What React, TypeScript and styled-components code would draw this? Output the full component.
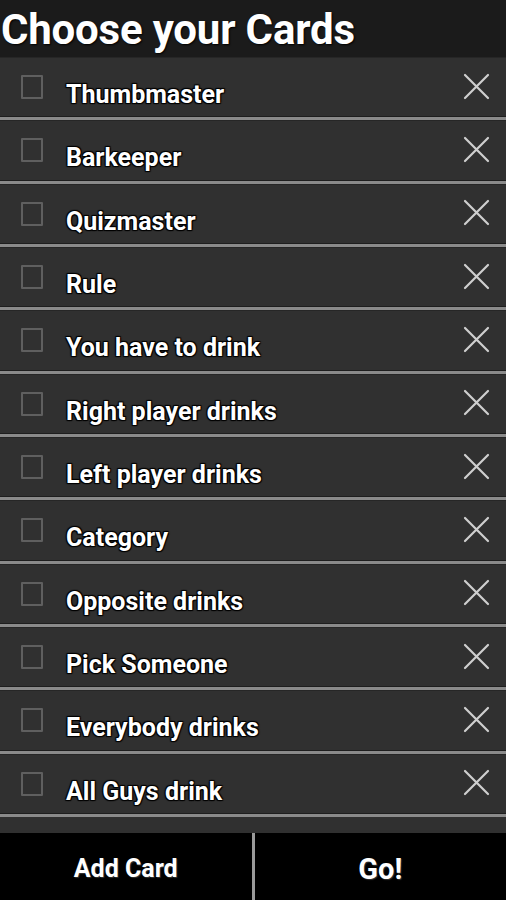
import React from 'react'
import styled, { createGlobalStyle } from 'styled-components'

const GlobalStyle = createGlobalStyle`
  html, body {
    margin: 0;
    padding: 0;
    background: #000;
  }
  body {
    font-family: Roboto, "Noto Sans", "Liberation Sans", sans-serif;
  }
`

const CARDS = [
  'Thumbmaster',
  'Barkeeper',
  'Quizmaster',
  'Rule',
  'You have to drink',
  'Right player drinks',
  'Left player drinks',
  'Category',
  'Opposite drinks',
  'Pick Someone',
  'Everybody drinks',
  'All Guys drink',
]

const Screen = styled.div`
  width: 506px;
  height: 900px;
  display: flex;
  flex-direction: column;
  overflow: hidden;
  background: #2f2f2f;
`

const Header = styled.h1`
  margin: 0;
  height: 57px;
  flex-shrink: 0;
  background: #1b1b1b;
  color: #fff;
  font-size: 42px;
  font-weight: 700;
  line-height: 60px;
  padding-left: 1px;
  text-shadow: 1px 1px 2px #000;
  letter-spacing: -0.2px;
  white-space: nowrap;
  overflow: hidden;
`

const List = styled.div`
  flex: 1;
  overflow: hidden;
  display: flex;
  flex-direction: column;
  background: #303030;
`

const Row = styled.div`
  flex-shrink: 0;
  height: 63.33px;
  box-sizing: border-box;
  display: flex;
  align-items: center;
  background: #303030;
  border-top: 1px solid #262626;
  border-bottom: 3px solid #8a8a8a;
  box-shadow: inset 0 -1px 0 #1e1e1e;
  padding: 0 16px 0 21px;
`

const Check = styled.span`
  width: 18px;
  height: 20px;
  border: 2px solid #5f5f5f;
  border-radius: 1px;
  flex-shrink: 0;
  margin-top: -1px;
`

const Label = styled.span`
  flex: 1;
  margin-left: 23px;
  padding-top: 14px;
  color: #fff;
  font-size: 25px;
  font-weight: 700;
  text-shadow: 1px 1px 1px #000, -1px -1px 1px #000, 1px -1px 1px #000, -1px 1px 1px #000;
`

const Remove = styled.svg`
  width: 27px;
  height: 27px;
  flex-shrink: 0;
  margin-top: -3px;
`

const Footer = styled.div`
  height: 67px;
  flex-shrink: 0;
  display: flex;
  background: #000;
`

const FooterButton = styled.button<{ $big?: boolean }>`
  flex: 1;
  border: none;
  background: transparent;
  color: #fff;
  font-family: Roboto, "Noto Sans", "Liberation Sans", sans-serif;
  font-weight: 700;
  font-size: ${({ $big }) => ($big ? '29px' : '25px')};
  padding: 0;
  padding-top: 4px;
  text-shadow: 1px 1px 1px #333;
`

const Divider = styled.div`
  width: 3px;
  background: #9a9a9a;
`

function CardRow({ name }: { name: string }) {
  return (
    <Row>
      <Check />
      <Label>{name}</Label>
      <Remove viewBox="0 0 27 27">
        <path d="M2 2 L25 25 M25 2 L2 25" stroke="#cfcfcf" strokeWidth="2.2" strokeLinecap="round" />
      </Remove>
    </Row>
  )
}

export default function App() {
  return (
    <>
      <GlobalStyle />
      <Screen>
        <Header>Choose your Cards</Header>
        <List>
          {CARDS.map((c) => (
            <CardRow key={c} name={c} />
          ))}
        </List>
        <Footer>
          <FooterButton>Add Card</FooterButton>
          <Divider />
          <FooterButton $big>Go!</FooterButton>
        </Footer>
      </Screen>
    </>
  )
}
